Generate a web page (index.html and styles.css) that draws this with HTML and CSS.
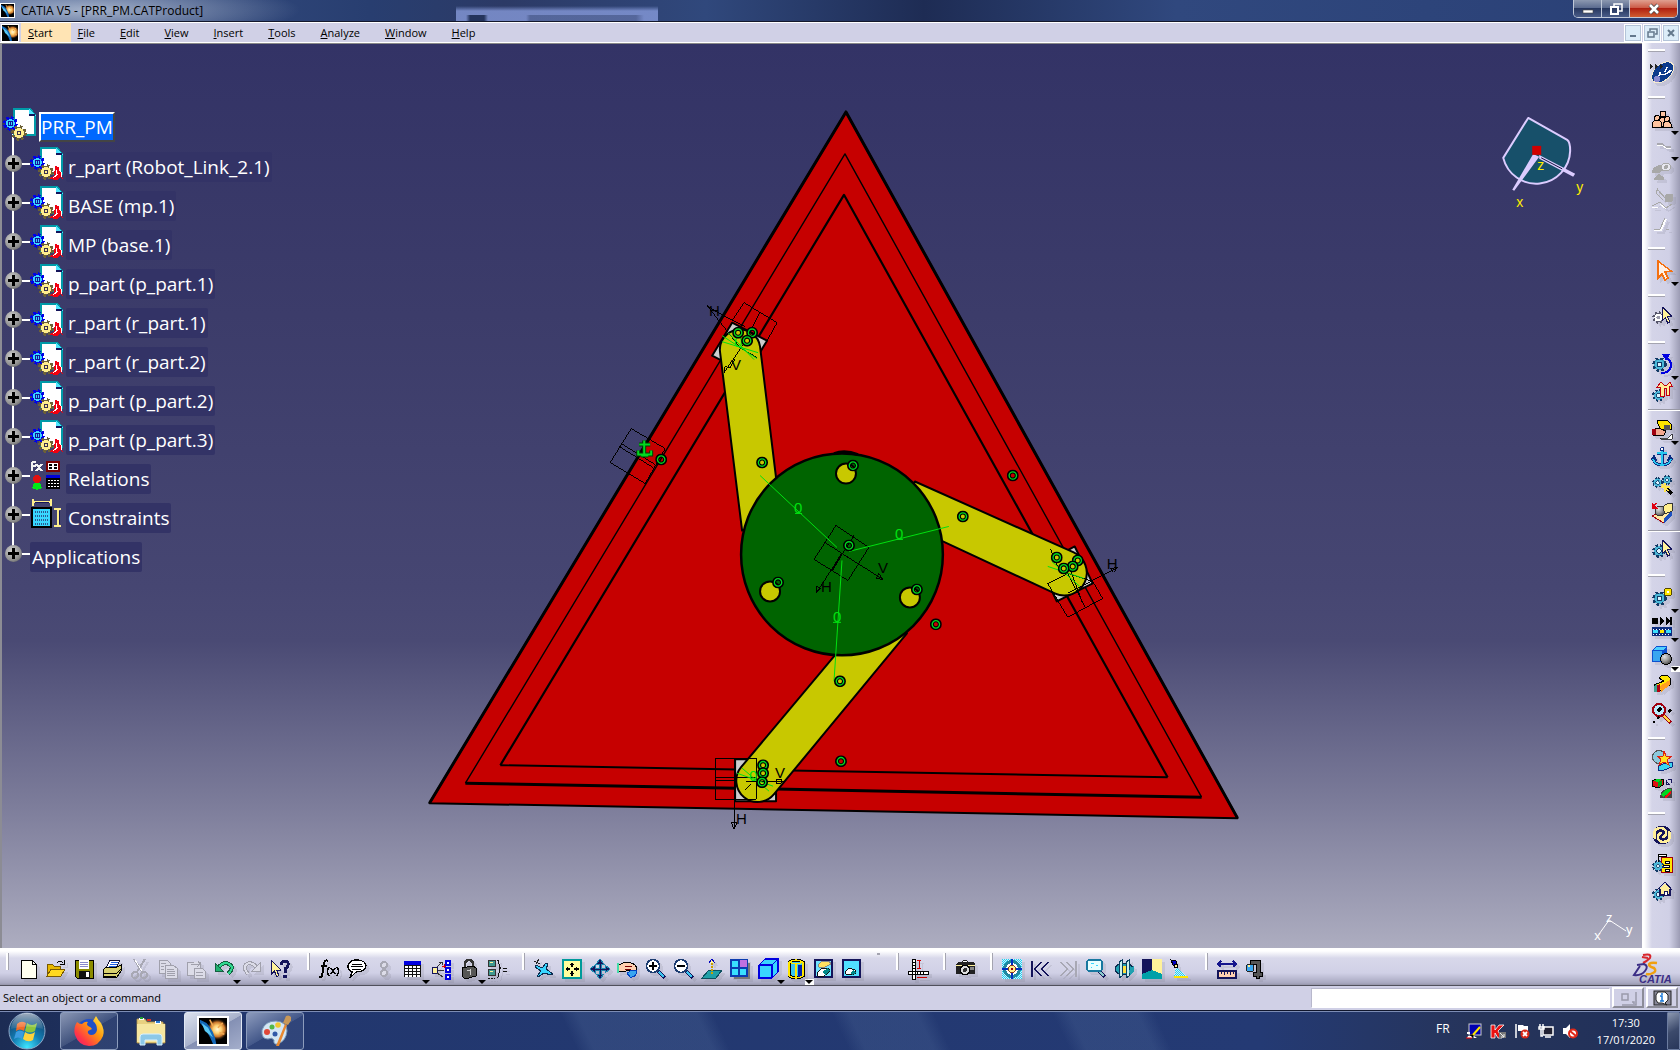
FILE: index.html
```html
<!DOCTYPE html>
<html lang="en">
<head>
<meta charset="utf-8">
<title>CATIA V5 - [PRR_PM.CATProduct]</title>
<link rel="stylesheet" href="styles.css">
</head>
<body>
<svg class="defs" aria-hidden="true">
<defs>
<pattern id="dots" width="2" height="2" patternUnits="userSpaceOnUse"><rect width="2" height="2" fill="#cfefff"/><rect width="1" height="1" fill="#22d0ee"/><rect x="1" y="1" width="1" height="1" fill="#22d0ee"/></pattern>
<radialGradient id="ball" cx=".35" cy=".3" r=".8"><stop offset="0" stop-color="#e4e4e4"/><stop offset=".5" stop-color="#9a9a9a"/><stop offset="1" stop-color="#3c3c3c"/></radialGradient>
<radialGradient id="burst" cx=".55" cy=".5" r=".5"><stop offset="0" stop-color="#fff8d8"/><stop offset=".35" stop-color="#ffd070"/><stop offset=".65" stop-color="#c8742a"/><stop offset="1" stop-color="#000" stop-opacity="0"/></radialGradient>
<radialGradient id="orb" cx=".5" cy=".95" r=".9"><stop offset="0" stop-color="#3fe6ff"/><stop offset=".45" stop-color="#137fb5"/><stop offset="1" stop-color="#123a66"/></radialGradient>
<linearGradient id="shine" x1="0" y1="0" x2="0" y2="1"><stop offset="0" stop-color="#fff" stop-opacity=".75"/><stop offset="1" stop-color="#fff" stop-opacity=".1"/></linearGradient>
<linearGradient id="fox" x1="1" y1="0" x2="0" y2="1"><stop offset="0" stop-color="#fff44f"/><stop offset=".4" stop-color="#ff980e"/><stop offset=".75" stop-color="#ff3647"/><stop offset="1" stop-color="#e31587"/></linearGradient>
<symbol id="gear" viewBox="0 0 14 14"><circle cx="7" cy="7" r="5" fill="none" stroke="currentColor" stroke-width="3.6" stroke-dasharray="2.2 1.7"/><circle cx="7" cy="7" r="5" fill="currentColor"/></symbol>
<symbol id="gearc" viewBox="0 0 14 14"><circle cx="7" cy="7" r="5.3" fill="#39a6c6" stroke="#123a66" stroke-width="3" stroke-dasharray="2.4 1.8"/><circle cx="7" cy="7" r="4.6" fill="#4db8d8"/><circle cx="7" cy="7" r="2.2" fill="#d8f4ff" stroke="#123a66"/></symbol>
<symbol id="cursor" viewBox="0 0 10 16"><path d="M1 0V13L4 10L6 15L8 14L6 9H10Z" fill="#fff29a" stroke="#14145a"/></symbol>
<symbol id="comet" viewBox="0 0 16 16"><rect width="16" height="16" fill="#000"/><ellipse cx="10" cy="7" rx="7" ry="7" fill="url(#burst)"/><path d="M0 1L4 3Q9 8 10 16H8Q5 8 0 3Z" fill="#1468b8"/><path d="M1 3L5 6L8 12L3 8Z" fill="#59c8f4"/><path d="M6 1L8 5M14 3L11 6M15 10L12 9" stroke="#f0a850"/></symbol>
<symbol id="part" viewBox="0 0 33 33">
<path d="M11 1H27L32 7V27H11Z" fill="#fff" stroke="#009aa8" stroke-width="2"/><path d="M26 0L33 8H26Z" fill="#4de6ff"/><rect x="26" y="6" width="6" height="2" fill="#14145a"/>
<g color="#0000e8"><use href="#gear" x="0" y="8" width="15" height="15"/></g><circle cx="7.500" cy="15.500" r="4.500" fill="#39d6ff"/><rect x="5" y="13" width="5" height="5" fill="#14149a"/><rect x="6" y="14" width="3" height="3" fill="#39d6ff"/><rect x="7" y="14" width="1" height="3" fill="#14149a"/>
<path d="M25 19L29 20V24L32 26V29L33 33L30 30L27 33L19 32L24 29Z" fill="#f00010"/><path d="M26 23V29M23 31L28 27M31 25V30" stroke="#fff" stroke-width="1"/>
<g color="#6b6038"><use href="#gear" x="8" y="17" width="16" height="16"/></g><circle cx="16" cy="25" r="5" fill="#ffee8c"/><rect x="14" y="23" width="4" height="4" fill="#3a3050"/><rect x="15" y="24" width="2" height="2" fill="#ffee8c"/>
</symbol>
<symbol id="product" viewBox="0 0 33 33">
<path d="M11 1H27L32 7V27H11Z" fill="#fff" stroke="#009aa8" stroke-width="2"/><path d="M26 0L33 8H26Z" fill="#4de6ff"/><rect x="26" y="6" width="6" height="2" fill="#14145a"/>
<g color="#0000e8"><use href="#gear" x="0" y="8" width="15" height="15"/></g><circle cx="7.500" cy="15.500" r="4.500" fill="#39d6ff"/><rect x="5" y="13" width="5" height="5" fill="#14149a"/><rect x="6" y="14" width="3" height="3" fill="#39d6ff"/><rect x="7" y="14" width="1" height="3" fill="#14149a"/>
<g color="#6b6038"><use href="#gear" x="8" y="17" width="16" height="16"/></g><circle cx="16" cy="25" r="5" fill="#ffee8c"/><rect x="14" y="23" width="4" height="4" fill="#3a3050"/><rect x="15" y="24" width="2" height="2" fill="#ffee8c"/>
</symbol>
<symbol id="relations" viewBox="0 0 33 33"><path d="M2 12V4Q2 2 6 3M1 7H6M6 5L12 12M12 5L6 12" stroke="#f4f4f4" stroke-width="2" fill="none"/><rect x="17" y="3" width="12" height="9" fill="#fff" stroke="#7a0000" stroke-width="2"/><path d="M19 6H22M24 6H27M19 9H22M24 9H27" stroke="#000" stroke-width="2"/><circle cx="7" cy="20" r="4" fill="#e01010"/><path d="M4 24H10L12 29L7 31L2 29Z" fill="#00e818"/><rect x="16" y="16" width="14" height="14" fill="#000"/><rect x="16" y="16" width="14" height="3" fill="#0000d8"/><path d="M18 21H29M18 24H29M18 27H29" stroke="#fff" stroke-dasharray="2 1"/></symbol>
<symbol id="constraints" viewBox="0 0 33 33"><path d="M3 1V8M21 1V8M3 4H21" stroke="#ffee8c" stroke-width="2"/><path d="M5 4H19" stroke="#14145a"/><path d="M24 11H31M24 28H31M28 11V28" stroke="#ffee8c" stroke-width="2"/><path d="M29 13V26" stroke="#14145a"/><rect x="2" y="10" width="19" height="19" fill="#39d6ff" stroke="#000" stroke-width="2"/><path d="M5 14H19M5 18H19M5 22H19M5 26H19" stroke="#2a5a90" stroke-width="2" stroke-dasharray="1 1"/></symbol>
<symbol id="ring" viewBox="-6 -6 12 12"><circle r="4" fill="none" stroke="#000" stroke-width="4"/><circle r="3.700" fill="none" stroke="#00d820" stroke-width="1.300"/></symbol>
</defs>
</svg>

<header class="titlebar">
  <svg class="appicon"><use href="#comet"/></svg>
  <h1 class="caption">CATIA V5 - [PRR_PM.CATProduct]</h1>
  <div class="winctl">
    <button class="winbtn" aria-label="Minimize"><svg viewBox="0 0 14 12"><rect x="2" y="7" width="10" height="3" fill="#fff" stroke="#444" stroke-width=".6"/></svg></button>
    <button class="winbtn" aria-label="Restore"><svg viewBox="0 0 14 12"><path d="M5 3V1H13V8H10" fill="none" stroke="#fff" stroke-width="1.500"/><rect x="2" y="4" width="7" height="7" fill="none" stroke="#fff" stroke-width="2"/></svg></button>
    <button class="winbtn winbtn-close" aria-label="Close"><svg viewBox="0 0 14 12"><path d="M3 2L11 10M11 2L3 10" stroke="#444" stroke-width="4"/><path d="M3 2L11 10M11 2L3 10" stroke="#fff" stroke-width="2.600"/></svg></button>
  </div>
</header>

<nav class="menubar">
  <svg class="menuicon"><use href="#comet"/></svg>
  <button class="menu menu-on"><u>S</u>tart</button>
  <button class="menu"><u>F</u>ile</button>
  <button class="menu"><u>E</u>dit</button>
  <button class="menu"><u>V</u>iew</button>
  <button class="menu"><u>I</u>nsert</button>
  <button class="menu"><u>T</u>ools</button>
  <button class="menu"><u>A</u>nalyze</button>
  <button class="menu"><u>W</u>indow</button>
  <button class="menu"><u>H</u>elp</button>
  <div class="mdi">
    <button class="mdibtn" aria-label="Minimize document"><svg viewBox="0 0 12 12"><path d="M3 9H9" stroke="#64788c" stroke-width="2"/></svg></button>
    <button class="mdibtn" aria-label="Restore document"><svg viewBox="0 0 12 12"><path d="M4 4V2H11V7H9M2 5H8V10H2Z" fill="none" stroke="#64788c" stroke-width="1.500"/></svg></button>
    <button class="mdibtn" aria-label="Close document"><svg viewBox="0 0 12 12"><path d="M3 3L9 9M9 3L3 9" stroke="#64788c" stroke-width="2"/></svg></button>
  </div>
</nav>

<div class="work">
<main class="viewport">
<svg class="scene" viewBox="0 42 1642 906" preserveAspectRatio="xMidYMid meet">
  <g stroke="#000" stroke-linejoin="round">
    <path d="M846 111L429 803L1238 818Z" fill="#c60000" stroke-width="2"/>
    <path d="M429 803L846 111L1238 818" fill="none" stroke-width="3"/>
    <path d="M465 783L845 153L1202 797" fill="none" stroke-width="1.400"/>
    <path d="M465 783L1202 797" fill="none" stroke-width="3"/>
    <path d="M500 765L844 194L1168 777" fill="none" stroke-width="2.200"/>
    <path d="M500 765L1168 777" fill="none" stroke-width="2"/>
    <g fill="#cdcdcd" stroke-width="2">
      <path d="M732 322L767 340L747 373L712 355Z"/>
      <path d="M1075 546L1093 583L1057 601L1040 565Z"/>
      <path d="M735 759H776V801H735Z"/>
    </g>
    <g fill="#c8c800" stroke-width="2">
      <path d="M742 530L720 352A20 20 0 0 1 760 346L776 477L800 520Z"/>
      <path d="M915 481L1074 552A21 21 0 0 1 1055 593L943 541L890 520Z"/>
      <path d="M834 656L741 767A21 21 0 0 0 774 794L907 633L880 610Z"/>
    </g>
    <circle cx="842" cy="554" r="101" fill="#006400" stroke-width="2.500"/>
    <path d="M834 453Q845 449 858 454" fill="none" stroke-width="3"/>
    <g fill="#c8c800" stroke-width="2"><circle cx="846" cy="473" r="10"/><circle cx="770" cy="591" r="10"/><circle cx="910" cy="597" r="10"/></g>
  </g>
  <g stroke="#000" fill="none" shape-rendering="crispEdges">
    <path d="M836 525L869 547L848 580L814 559ZM825 542L859 564M854 535L832 570M842 553L883 579L876 578L879 573L883 579M842 553L816 593L817 586L821 588L816 593"/>
    <path d="M842 553L832 570" stroke-width="2"/>
    <path d="M732 320L744 302L777 322L767 340M760 311L752 327M707 305L740 347L757 357M707 305L718 312L745 326M743 344L724 372L725 366L730 367L735 358"/>
    <path d="M631 428L665 448L645 483L610 462ZM621 443L655 464M619 446L653 467"/>
    <path d="M1048 583L1068 573L1093 581L1103 598L1068 617ZM1068 573L1086 608M1071 571L1083 603M1068 593L1118 567L1111 568L1114 572L1118 567M1051 549L1058 566"/>
    <path d="M715 758H756V799H715ZM715 777H756M715 780H737M734 758V829L731 822H737L734 829M746 781H784M776 779H781V783H776ZM751 784L745 790"/>
  </g>
  <g stroke="#00e010" fill="none">
    <path d="M760 475L837 547M849 551L949 526M842 560L834 681"/>
    <path d="M722 335L757 358M722 341L758 352M728 332L754 359M1048 566L1084 578M1052 561L1080 586M737 773L773 786M742 768L769 791"/>
    <path d="M795 513H802M896 539H903M833 622H841"/>
  </g>
  <g class="dim"><text x="794" y="513">0</text><text x="895" y="539">0</text><text x="833" y="622">0</text><text x="734" y="346">0</text><text x="749" y="781">0</text></g>
  <g class="axis"><text x="709" y="315">H</text><text x="731" y="369">V</text><text x="878" y="573">V</text><text x="821" y="592">H</text><text x="1107" y="569">H</text><text x="775" y="778">V</text><text x="736" y="824">H</text></g>
  <g>
    <use href="#ring" x="732" y="326" width="12" height="12"/><use href="#ring" x="746" y="326" width="12" height="12"/><use href="#ring" x="741" y="334" width="12" height="12"/>
    <use href="#ring" x="756" y="456" width="12" height="12"/><use href="#ring" x="655" y="453" width="12" height="12"/><use href="#ring" x="843" y="539" width="12" height="12"/>
    <use href="#ring" x="957" y="510" width="12" height="12"/><use href="#ring" x="1007" y="469" width="12" height="12"/><use href="#ring" x="1051" y="551" width="12" height="12"/>
    <use href="#ring" x="1072" y="554" width="12" height="12"/><use href="#ring" x="1067" y="560" width="12" height="12"/><use href="#ring" x="1058" y="562" width="12" height="12"/>
    <use href="#ring" x="930" y="618" width="12" height="12"/><use href="#ring" x="834" y="675" width="12" height="12"/><use href="#ring" x="835" y="755" width="12" height="12"/>
    <use href="#ring" x="757" y="759" width="12" height="12"/><use href="#ring" x="757" y="767" width="12" height="12"/><use href="#ring" x="756" y="776" width="12" height="12"/>
    <use href="#ring" x="847" y="459" width="12" height="12"/><use href="#ring" x="772" y="576" width="12" height="12"/><use href="#ring" x="911" y="583" width="12" height="12"/>
  </g>
  <path d="M644 440V455M639 444H650M638 450V454H651V450M641 455H648" fill="none" stroke="#003c00" stroke-width="4"/>
  <path d="M644 440V455M639 444H650M638 450V454H651V450M641 455H648" fill="none" stroke="#00d820" stroke-width="2"/>
  <g>
    <path d="M1529 117L1568 139Q1571 141 1571 150A34 34 0 0 1 1504 157Z" fill="#17506a" stroke="#dcccff" stroke-width="2" stroke-linejoin="round"/>
    <path d="M1534 153L1540 156L1515 190L1513 189ZM1540 154L1576 173L1574 176L1540 158Z" fill="#dcccff"/>
    <path d="M1542 157L1563 168" stroke="#14143c"/>
    <rect x="1533" y="145" width="9" height="9" fill="#d00000"/>
    <g class="compass"><text x="1517" y="206">x</text><text x="1577" y="191">y</text><text x="1538" y="169">z</text></g>
    <path d="M1600 934L1610 920L1627 931" fill="none" stroke="#fff"/>
    <g class="triad"><text x="1607" y="922">z</text><text x="1595" y="940">x</text><text x="1627" y="934">y</text></g>
  </g>
</svg>
<ul class="tree">
  <li class="node node-root"><svg class="nodeicon"><use href="#product"/></svg><span class="label label-sel">PRR_PM</span></li>
  <li class="node"><button class="plus" aria-label="Expand"></button><svg class="nodeicon"><use href="#part"/></svg><span class="label">r_part (Robot_Link_2.1)</span></li>
  <li class="node"><button class="plus" aria-label="Expand"></button><svg class="nodeicon"><use href="#part"/></svg><span class="label">BASE (mp.1)</span></li>
  <li class="node"><button class="plus" aria-label="Expand"></button><svg class="nodeicon"><use href="#part"/></svg><span class="label">MP (base.1)</span></li>
  <li class="node"><button class="plus" aria-label="Expand"></button><svg class="nodeicon"><use href="#part"/></svg><span class="label">p_part (p_part.1)</span></li>
  <li class="node"><button class="plus" aria-label="Expand"></button><svg class="nodeicon"><use href="#part"/></svg><span class="label">r_part (r_part.1)</span></li>
  <li class="node"><button class="plus" aria-label="Expand"></button><svg class="nodeicon"><use href="#part"/></svg><span class="label">r_part (r_part.2)</span></li>
  <li class="node"><button class="plus" aria-label="Expand"></button><svg class="nodeicon"><use href="#part"/></svg><span class="label">p_part (p_part.2)</span></li>
  <li class="node"><button class="plus" aria-label="Expand"></button><svg class="nodeicon"><use href="#part"/></svg><span class="label">p_part (p_part.3)</span></li>
  <li class="node"><button class="plus" aria-label="Expand"></button><svg class="nodeicon"><use href="#relations"/></svg><span class="label">Relations</span></li>
  <li class="node"><button class="plus" aria-label="Expand"></button><svg class="nodeicon"><use href="#constraints"/></svg><span class="label">Constraints</span></li>
  <li class="node node-bare"><button class="plus" aria-label="Expand"></button><span class="label">Applications</span></li>
</ul>
</main>

<aside class="sidebar">
  <div class="group">
    <button class="tool" aria-label="DMU Kinematics"><svg viewBox="0 0 20 20"><g transform="rotate(-42 10 11)"><ellipse cx="11" cy="11" rx="13" ry="8" fill="#0c3a8c" stroke="#f4ead0"/></g><path d="M3 17Q8 15 8 10M8 12Q14 14 19 8M13 10L15 5" stroke="#fff" fill="none" stroke-width="1.500"/><circle cx="5" cy="17" r="3" fill="#8888d0"/><path d="M-2 2L1 4.500L-2 7ZM3 2L6 4.500L3 7ZM8 2L11 4.500L8 7Z" fill="#222"/></svg></button>
  </div>
  <div class="group group-tight">
    <button class="tool drop" aria-label="Manikin"><svg viewBox="0 0 20 20"><g fill="#ffc4a0" stroke="#000"><path d="M6 17Q6 8 11 8T16 17Z"/><circle cx="11" cy="5" r="3"/><path d="M0 18Q0 11 5 11T10 18Z"/><circle cx="5" cy="9" r="2.500"/><path d="M11 18Q11 12 15 12T20 18Z"/><circle cx="15" cy="10" r="2.500"/></g></svg></button>
    <button class="tool drop" aria-label="Spline" disabled><svg viewBox="0 0 20 20"><path d="M5 8H10L14 11H19" stroke="#a8a8b0" stroke-width="1.500" fill="none"/><path d="M5 9H10L14 12H19" stroke="#fff" fill="none"/></svg></button>
    <button class="tool" aria-label="Swept volume" disabled><svg viewBox="0 0 20 20"><path d="M0 11Q0 4 8 3L12 7Q9 11 5 11ZM3 15L7 12L12 15V18H2Z" fill="#a8a8a8"/><ellipse cx="14" cy="5" rx="5" ry="4" fill="#e8e8f0" stroke="#a8a8a8"/><circle cx="14" cy="5" r="2" fill="#a8a8a8"/></svg></button>
    <button class="tool" aria-label="Trace" disabled><svg viewBox="0 0 20 20"><path d="M6 2L13 10M4 5L11 12M4 5L6 0M0 18L8 14L14 20L20 16" stroke="#a8a8a8" stroke-width="1.200" fill="none"/><rect x="13" y="6" width="8" height="8" rx="2" fill="#a8a8a8"/><path d="M0 19H6M8 16L14 21" stroke="#fff"/></svg></button>
    <button class="tool" aria-label="Plane" disabled><svg viewBox="0 0 20 20"><path d="M2 16H9L14 5" stroke="#fff" stroke-width="2" fill="none"/><path d="M2 15H8L13 4M14 15H17" stroke="#a8a8a8" fill="none"/></svg></button>
  </div>
  <div class="group"><button class="tool drop" aria-label="Select"><svg viewBox="0 0 20 20"><path d="M6 1V18L10 14L13 20L16 18L13 12L19 11Z" fill="#fff0e4" stroke="#f47010" stroke-width="1.500"/></svg></button></div>
  <div class="group"><button class="tool drop" aria-label="Product selection"><svg viewBox="0 0 20 20"><g color="#55556a"><use href="#gear" x="0" y="4" width="13" height="13"/></g><circle cx="6.500" cy="10.500" r="4" fill="#fff"/><circle cx="6.500" cy="10.500" r="2" fill="#99a"/><use href="#cursor" x="9" y="0" width="11" height="17"/></svg></button></div>
  <div class="group">
    <button class="tool drop" aria-label="Update"><svg viewBox="0 0 20 20"><use href="#gearc" x="0" y="3" width="15" height="15"/><path d="M9 19Q19 19 19 10Q18 5 13 4" stroke="#0000e0" stroke-width="2" fill="none"/><path d="M10 0H18L14 7Z" fill="#0000e0"/></svg></button>
    <button class="tool" aria-label="Manipulate"><svg viewBox="0 0 20 20"><use href="#gearc" x="0" y="7" width="13" height="13"/><path d="M8 14V5H5L9 0L12 3L15 3L18 0L20 4H17V13H14V6H12V14Z" fill="#ffee9a" stroke="#c00010"/></svg></button>
    <hr class="rule">
    <button class="tool drop" aria-label="Existing component"><svg viewBox="0 0 20 20"><path d="M5 2L15 1L19 5V10H8Z" fill="#ffe600" stroke="#000"/><path d="M12 6H18V11H12Z" fill="#555"/><path d="M0 11L6 9L14 12L12 16H1Z" fill="#f4a890" stroke="#000"/><path d="M0 10H4V16H0Z" fill="#a00010"/><path d="M8 19H16L20 15V20H9Z" fill="#fff" stroke="#000" stroke-width=".7"/></svg></button>
    <button class="tool" aria-label="Fix component"><svg viewBox="0 0 20 20"><path d="M10 3V18M5 6H15M1 12Q3 18 10 18T19 12M0 13L2 10L4 14M16 14L18 10L20 13" stroke="#0c2c80" stroke-width="3" fill="none"/><path d="M10 3V18M5 6H15M1 12Q3 18 10 18T19 12" stroke="#28c8f0" stroke-width="1.500" fill="none"/><circle cx="10" cy="2" r="1.500" fill="#fff" stroke="#0c2c80"/></svg></button>
    <button class="tool" aria-label="Quick constraint"><svg viewBox="0 0 20 20"><use href="#gearc" x="0" y="2" width="11" height="11"/><use href="#gearc" x="10" y="0" width="10" height="10"/><path d="M15 14L20 19" stroke="#000" stroke-width="3"/><path d="M13 8V17M9 12H18M10 9L16 16" stroke="#ffe650" stroke-width="1.500"/></svg></button>
    <button class="tool" aria-label="Flexible sub-assembly"><svg viewBox="0 0 20 20"><path d="M0 13L12 20L20 10L12 8Z" fill="#ffe8a0" stroke="#a00010"/><path d="M12 20L20 12V7L12 15Z" fill="#1c50c0"/><circle cx="8" cy="8" r="5" fill="url(#ball)" stroke="#333"/><path d="M11 4Q14 0 20 0V8L13 11Z" fill="#ffee8c" stroke="#333"/><path d="M0 0V5H5ZM5 0L1 3" fill="#e00010" stroke="#e00010"/></svg></button>
    <hr class="rule">
    <button class="tool" aria-label="Component select"><svg viewBox="0 0 20 20"><use href="#gearc" x="0" y="4" width="14" height="14"/><use href="#cursor" x="9" y="0" width="11" height="17"/></svg></button>
  </div>
  <div class="group group-loose">
    <button class="tool drop" aria-label="Mechanism"><svg viewBox="0 0 20 20"><use href="#gearc" x="0" y="4" width="15" height="15"/><circle cx="16" cy="5" r="4" fill="#ffe600" stroke="#554800"/><circle cx="16" cy="5" r="1.500" fill="#fff"/></svg></button>
    <button class="tool drop" aria-label="Simulation player"><svg viewBox="0 0 20 20"><path d="M0 2H6V8H0ZM8 1L13 5L8 9ZM14 1L18 5L14 9ZM18 1H20V9H18Z" fill="#000"/><rect x="0" y="11" width="20" height="9" fill="#0c2c80"/><path d="M1 13H19M1 18H19" stroke="#fff" stroke-dasharray="1 2"/><path d="M1 14H6V17H1ZM14 14H19V17H14Z" fill="#39e0ff"/><path d="M8 14H12V17H8Z" fill="#ffe600"/></svg></button>
    <button class="tool drop drop-lit" aria-label="Clash"><svg viewBox="0 0 20 20"><path d="M0 5L4 1H15V13L11 17H0Z" fill="#0c50d0"/><path d="M1 6H10V16H1Z" fill="#39a6f0"/><path d="M1 5L5 2H14L11 5Z" fill="#50d0ff"/><circle cx="14" cy="14" r="5.500" fill="url(#ball)" stroke="#000"/></svg></button>
    <button class="tool" aria-label="Sweep"><svg viewBox="0 0 20 20"><path d="M2 11V17H8L18 11V4L15 1H10L7 4L10 6L12 7Z" fill="#ffe600" stroke="#000"/><path d="M2 12L5 10V18H2Z" fill="#40a090"/><path d="M8 12L18 6V11L9 18Z" fill="#ffa020"/><path d="M5 11L8 10V18H5Z" fill="#b00010"/></svg></button>
    <button class="tool" aria-label="Analyze mechanism"><svg viewBox="0 0 20 20"><path d="M11 12L19 20" stroke="#a00010" stroke-width="4"/><path d="M12 13L18 19" stroke="#ffd840" stroke-width="2"/><circle cx="7" cy="7" r="6" fill="#b8ecff" stroke="#a00010" stroke-width="2"/><path d="M4 7L8 3L10 6L7 9ZM5 14L7 12L8 15L5 16ZM15 8L18 5L20 8L17 10ZM1 18H3V20H1Z" fill="#000"/></svg></button>
  </div>
  <div class="group">
    <button class="tool" aria-label="Explode"><svg viewBox="0 0 20 20"><circle cx="7" cy="7" r="6.500" fill="#8cc8dc" stroke="#555"/><path d="M6 16L16 12H20V17L12 20H6Z" fill="#39d6f0" stroke="#0c2c80"/><path d="M12 1L14 6L20 6L15 10L17 15L12 12L7 15L9 9L5 6L11 6Z" fill="#ffe020" stroke="#e02010"/></svg></button>
    <button class="tool" aria-label="Apply material"><svg viewBox="0 0 20 20"><path d="M0 3L5 1H11V7L6 10L0 8Z" fill="#e01010" stroke="#000"/><path d="M1 3L5 1H10L6 4Z" fill="#00d820"/><path d="M6 4L10 2V7L6 9Z" fill="#00a018"/><path d="M14 2V6H18M14 3L18 7M16 1H19V5" stroke="#14145a" fill="none"/><path d="M8 20Q8 10 20 10V20Z" fill="#444"/><path d="M9 17Q12 11 19 11V14L11 19Z" fill="#00d820"/><path d="M12 19L19 13V16L14 20Z" fill="#f01010"/></svg></button>
  </div>
  <div class="group">
    <button class="tool" aria-label="Refresh"><svg viewBox="0 0 20 20"><circle cx="10" cy="10" r="9.500" fill="#14145a"/><path d="M3 14Q0 3 9 3Q15 4 14 9Q14 12 10 12M17 6Q20 17 11 17Q5 16 6 11Q6 8 10 8" stroke="#ffee9a" stroke-width="2.500" fill="none"/></svg></button>
    <button class="tool" aria-label="Command structure"><svg viewBox="0 0 20 20"><rect x="9" y="4" width="11" height="15" fill="#ffe600" stroke="#a00010"/><path d="M6 1H14V3H6ZM6 3V9" fill="#fff" stroke="#000"/><path d="M13 8H17V10H13ZM11 12H17V14H11ZM13 16H17V18H13Z" fill="#fff" stroke="#000"/><use href="#gearc" x="0" y="7" width="12" height="12"/></svg></button>
    <button class="tool" aria-label="Home product"><svg viewBox="0 0 20 20"><use href="#gearc" x="0" y="7" width="13" height="13"/><path d="M7 8V15H18V8L13 2Z" fill="#ffee9a"/><path d="M5 9L13 1L20 9M8 8V14H18V8" fill="none" stroke="#14145a" stroke-width="1.200"/><rect x="12" y="10" width="3" height="4" fill="#fff" stroke="#14145a"/></svg></button>
  </div>
</aside>
</div>

<div class="toolbar">
  <div class="hgroup">
    <button class="tool" aria-label="New"><svg viewBox="0 0 20 20"><path d="M3 1H14L18 5V19H3Z" fill="#fffff0" stroke="#000"/><path d="M14 1V5H18" fill="none" stroke="#000"/></svg></button>
    <button class="tool" aria-label="Open"><svg viewBox="0 0 20 20"><path d="M1 17V5H6L8 7H14V10" fill="#e8b800" stroke="#7a5a00"/><path d="M1 17L5 10H19L15 17Z" fill="#ffd820" stroke="#7a5a00"/><path d="M11 4Q14 1 17 4M18 1V5H14" stroke="#000" fill="none"/></svg></button>
    <button class="tool" aria-label="Save"><svg viewBox="0 0 20 20"><path d="M1 1H19V19H3L1 17Z" fill="#8c8c00" stroke="#000"/><rect x="5" y="1" width="10" height="9" fill="#fff"/><path d="M6 3H14M6 5H14M6 7H14" stroke="#88c"/><rect x="5" y="12" width="11" height="7" fill="#111"/><rect x="12" y="13" width="3" height="5" fill="#fff"/></svg></button>
    <button class="tool" aria-label="Print"><svg viewBox="0 0 20 20"><path d="M8 1H18L14 9H4Z" fill="#fff" stroke="#113"/><path d="M9 3H16M8 5H15M7 7H14" stroke="#2060e0"/><path d="M1 11L4 8H15L19 6V12L15 18H1Z" fill="#d8d070" stroke="#000"/><path d="M1 14H15L19 10M2 17H14" stroke="#000" fill="none"/></svg></button>
    <button class="tool" aria-label="Cut" disabled><svg viewBox="0 0 20 20"><path d="M4 0L12 13M15 0L7 13" stroke="#a8a8b4" stroke-width="2"/><path d="M5 1L12 12" stroke="#fff"/><circle cx="5" cy="16" r="3" fill="none" stroke="#a8a8b4" stroke-width="2"/><circle cx="14" cy="16" r="3" fill="none" stroke="#a8a8b4" stroke-width="2"/></svg></button>
    <button class="tool" aria-label="Copy" disabled><svg viewBox="0 0 20 20"><g fill="#dcdce8" stroke="#a0a0ac"><path d="M1 1H9L12 4V14H1Z"/><path d="M7 6H15L19 9V19H7Z"/><path d="M9 10H16M9 12H17M9 14H17M9 16H17M3 4H8M3 7H6M3 10H6"/></g></svg></button>
    <button class="tool" aria-label="Paste" disabled><svg viewBox="0 0 20 20"><g fill="#dcdce8" stroke="#a0a0ac"><path d="M1 3H14V16H1Z"/><path d="M8 9H16L19 12V19H8Z"/><path d="M10 13H17M10 16H17M5 5H14L12 2M14 5L11 8"/></g></svg></button>
    <button class="tool drop" aria-label="Undo"><svg viewBox="0 0 20 20"><path d="M3 10Q9 2 15 5T14 15" stroke="#146040" stroke-width="4" fill="none"/><path d="M3 10Q9 2 15 5T14 15" stroke="#30d890" stroke-width="2" fill="none"/><path d="M1 4V12H9Z" fill="#20b070" stroke="#146040"/></svg></button>
    <button class="tool drop" aria-label="Redo" disabled><svg viewBox="0 0 20 20"><path d="M16 10Q10 2 5 5T6 15" stroke="#a0a0ac" stroke-width="4" fill="none"/><path d="M16 10Q10 2 5 5T6 15" stroke="#dcdce8" stroke-width="2" fill="none"/><path d="M18 4V12H10Z" fill="#dcdce8" stroke="#a0a0ac"/></svg></button>
    <button class="tool" aria-label="What's This?"><svg viewBox="0 0 20 20"><use href="#cursor" x="0" y="1" width="11" height="18"/><path d="M11 6Q11 2 15 2T18 6Q18 8 15 10V14" stroke="#14145a" stroke-width="3" fill="none"/><rect x="13" y="16" width="4" height="3" fill="#14145a"/></svg></button>
  </div>
  <div class="hgroup">
    <button class="tool" aria-label="Formula"><svg viewBox="0 0 20 20"><path d="M9 2Q6 0 5 5L3 17Q2 19 0 18M2 7H8" stroke="#000" stroke-width="2" fill="none"/><path d="M10 8Q7 12 10 17M18 8Q21 12 18 17M12 9L16 15M16 9L12 15" stroke="#000" stroke-width="1.500" fill="none"/></svg></button>
    <button class="tool" aria-label="Comment"><svg viewBox="0 0 20 20"><path d="M5 13Q0 11 1 6Q4 0 11 1Q19 2 19 7Q18 13 9 13L3 19Z" fill="#fff" stroke="#000" stroke-width="1.300"/><path d="M5 5H15M4 7H16M5 10H14" stroke="#000"/></svg></button>
    <button class="tool" aria-label="Check" disabled><svg viewBox="0 0 20 20"><circle cx="9" cy="6" r="3" fill="#dcdce8" stroke="#a8a8b4" stroke-width="2"/><circle cx="9" cy="14" r="3" fill="#dcdce8" stroke="#a8a8b4" stroke-width="2"/></svg></button>
    <button class="tool drop" aria-label="Design table"><svg viewBox="0 0 20 20"><rect x="1" y="2" width="17" height="16" fill="#111"/><rect x="1" y="2" width="17" height="4" fill="#0000e0"/><path d="M2 8H18M2 11H18M2 14H18M2 17H18" stroke="#fff" stroke-width="2" stroke-dasharray="3 1"/></svg></button>
    <button class="tool" aria-label="Knowledge links"><svg viewBox="0 0 20 20"><rect x="1" y="8" width="5" height="6" fill="#fff29a" stroke="#14145a"/><g fill="#fff" stroke="#0000e0" stroke-width="1.500"><rect x="15" y="2" width="4" height="4"/><rect x="15" y="9" width="4" height="4"/><rect x="15" y="16" width="4" height="4"/></g><path d="M6 8L11 3M8 3H11V6M7 11H13M6 14L12 18" stroke="#333" fill="none"/><path d="M13 5V9M11 7H15" stroke="#d00"/></svg></button>
    <button class="tool drop" aria-label="Lock"><svg viewBox="0 0 20 20"><path d="M6 9V5Q6 1 10 1T14 5V9" stroke="#333" stroke-width="2.500" fill="none"/><path d="M3 9L14 7L17 9V17L6 20L3 17Z" fill="#555" stroke="#000"/><path d="M8 12L11 11V16" stroke="#ccc" fill="none"/></svg></button>
    <button class="tool" aria-label="Equivalent dimensions"><svg viewBox="0 0 20 20"><rect x="1" y="1" width="7" height="6" fill="#409890" stroke="#333"/><rect x="1" y="10" width="7" height="6" fill="#409890" stroke="#333"/><path d="M3 3H6M3 12H6" stroke="#fff29a"/><path d="M1 19H3M4 19H6M7 19H8M10 1Q12 1 12 5T14 9Q12 9 12 14T10 18M16 9H20M16 12H20" stroke="#111" fill="none"/></svg></button>
  </div>
  <div class="hgroup">
    <button class="tool" aria-label="Fly mode"><svg viewBox="0 0 20 20"><path d="M2 6L8 9L12 4L14 5L12 10L19 15L17 16L10 14L4 18L3 17L7 12L1 8Z" fill="#39d6ff" stroke="#0c2c50"/><path d="M0 2L6 5M5 0L2 5" stroke="#222"/></svg></button>
    <button class="tool" aria-label="Fit all in"><svg viewBox="0 0 20 20"><rect x="1" y="1" width="18" height="18" fill="#ffff9c" stroke="#009a9a" stroke-width="2"/><path d="M10 4V8M10 12V17M4 10H8M12 10H17" stroke="#000" stroke-width="1.500"/><path d="M8 6L10 3L12 6ZM8 14L10 17L12 14ZM6 8L3 10L6 12ZM14 8L17 10L14 12Z"/></svg></button>
    <button class="tool" aria-label="Pan"><svg viewBox="0 0 20 20"><path d="M10 0L14 5H11V9H15V6L20 10L15 14V11H11V15H14L10 20L6 15H9V11H5V14L0 10L5 6V9H9V5H6Z" fill="#14145a" stroke="#2088b0"/></svg></button>
    <button class="tool" aria-label="Rotate"><svg viewBox="0 0 20 20"><path d="M0 6L8 3Q16 3 19 9L17 13Q10 10 8 12H1Z" fill="#ffd0b0" stroke="#000"/><path d="M7 7H14M7 10H13" stroke="#7a0000"/><path d="M9 14Q14 10 19 12Q18 19 12 18Z" fill="#39a6f0" stroke="#0040c0"/><path d="M0 4V14" stroke="#4da" stroke-width="2"/></svg></button>
    <button class="tool" aria-label="Zoom in"><svg viewBox="0 0 20 20"><path d="M12 12L19 19" stroke="#14145a" stroke-width="4"/><path d="M13 13L18 18" stroke="#39c6f0" stroke-width="2"/><circle cx="7" cy="7" r="6.500" fill="#fff" stroke="#1c3c70" stroke-width="1.500"/><path d="M3 7H11M7 3V11" stroke="#000" stroke-width="2"/></svg></button>
    <button class="tool" aria-label="Zoom out"><svg viewBox="0 0 20 20"><path d="M12 12L19 19" stroke="#14145a" stroke-width="4"/><path d="M13 13L18 18" stroke="#39c6f0" stroke-width="2"/><circle cx="7" cy="7" r="6.500" fill="#fff" stroke="#1c3c70" stroke-width="1.500"/><path d="M3 7H11" stroke="#000" stroke-width="2"/></svg></button>
    <button class="tool" aria-label="Normal view"><svg viewBox="0 0 20 20"><path d="M0 19L7 11H20L14 19Z" fill="#20a0a8" stroke="#0c5060"/><path d="M10 4V15" stroke="#c8a000" stroke-width="1.500" stroke-dasharray="2 1"/><path d="M7 4L10 0L13 4" fill="#fff29a" stroke="#0000c0"/></svg></button>
    <button class="tool" aria-label="Multi-view"><svg viewBox="0 0 20 20"><rect x="4" y="4" width="16" height="16" fill="#777"/><rect x="1" y="1" width="16" height="16" fill="#39e0ff" stroke="#0c3cb0" stroke-width="1.500"/><rect x="9" y="1" width="8" height="8" fill="#c070e0"/><path d="M9 1V17M1 9H17" stroke="#0c3cb0" stroke-width="1.500"/></svg></button>
    <button class="tool drop" aria-label="Isometric view"><svg viewBox="0 0 20 20"><path d="M1 6L7 0H20V13L14 19H1Z" fill="#39d6ff" stroke="#0000e0" stroke-width="1.300"/><path d="M1 6H14V19M14 6L20 0" fill="none" stroke="#0000e0" stroke-width="1.300"/></svg></button>
    <button class="tool drop drop-lit" aria-label="Shading with edges"><svg viewBox="0 0 20 20"><path d="M3 3V17Q10 21 17 17V3Q10 -1 3 3Z" fill="#39c6f0" stroke="#000" stroke-width="3"/><path d="M12 6H17V17L12 18Z" fill="#0020b0"/><path d="M3 3V17Q10 21 17 17V3Q10 -1 3 3Q10 7 17 3M10 5V19" fill="none" stroke="#ffe600" stroke-width="1.300"/></svg></button>
    <button class="tool" aria-label="Hide/Show"><svg viewBox="0 0 20 20"><rect x="1" y="1" width="17" height="17" fill="#70e4ff" stroke="#14145a" stroke-width="1.500"/><path d="M4 6L8 2H15L17 5L11 8H5Z" fill="#ffe060" stroke="#888"/><path d="M3 14L8 9H14L16 12L10 17H4Z" fill="#fff" stroke="#111"/><path d="M8 13L14 9L16 12L11 16Z" fill="#008888"/></svg></button>
    <button class="tool" aria-label="Swap visible space"><svg viewBox="0 0 20 20"><rect x="1" y="1" width="17" height="17" fill="#50e0ff" stroke="#14145a" stroke-width="1.500"/><path d="M3 13L7 9L13 11L14 14L10 16L4 15Z" fill="#fff" stroke="#111"/><path d="M8 14L12 11L14 14L10 16Z" fill="#008888"/></svg></button>
  </div>
  <div class="nub"></div>
  <div class="hgroup"><button class="tool" aria-label="Measure tolerance"><svg viewBox="0 0 20 20"><path d="M4 0H7V20H4ZM0 12H20V15H0Z" fill="#fff" stroke="#000"/><path d="M4 3H7M4 6H7M4 9H7M9 12V15M12 12V15M15 12V15" stroke="#000"/><path d="M11 1V9M9 1H13M9 9H13M9 18H19" stroke="#c00"/></svg></button></div>
  <div class="hgroup"><button class="tool" aria-label="Capture"><svg viewBox="0 0 20 20"><path d="M1 5L3 3H7L8 1H12L13 3H18L20 5V15H1Z" fill="#222"/><path d="M1 6H20" stroke="#fff29a"/><path d="M8 2H12" stroke="#fff"/><rect x="15" y="8" width="4" height="3" fill="#888"/><circle cx="10" cy="11" r="4.500" fill="#ddd" stroke="#000" stroke-width="1.500"/><circle cx="10" cy="11" r="2" fill="#333"/></svg></button></div>
  <div class="hgroup">
    <button class="tool" aria-label="Target"><svg viewBox="0 0 20 20"><rect width="20" height="20" fill="url(#dots)"/><circle cx="10" cy="10" r="7.500" fill="#fff" stroke="#2088a0" stroke-width="3"/><path d="M10 0V20M0 10H20" stroke="#0030c0" stroke-width="1.300"/><circle cx="10" cy="10" r="3.500" fill="#ffee8c" stroke="#904020"/><circle cx="10" cy="10" r="1.500" fill="#a00010"/></svg></button>
    <button class="tool" aria-label="Previous view"><svg viewBox="0 0 20 20"><path d="M2 2V18M11 3L5 10L11 17M18 3L12 10L18 17" stroke="#14145a" stroke-width="1.500" fill="none"/></svg></button>
    <button class="tool" aria-label="Next view" disabled><svg viewBox="0 0 20 20"><path d="M18 2V18M3 3L9 10L3 17M9 3L15 10L9 17" stroke="#a8a8b4" stroke-width="1.500" fill="none"/></svg></button>
    <button class="tool" aria-label="Magnifier"><svg viewBox="0 0 20 20"><path d="M13 12L19 18" stroke="#14145a" stroke-width="4"/><path d="M14 13L18 17" stroke="#8cc" stroke-width="1.500"/><rect x="1" y="1" width="15" height="11" rx="3" fill="#e8ffff" stroke="#1878a0" stroke-width="1.800"/><path d="M5 4H8M10 6H12M5 8H6" stroke="#39d6ff"/></svg></button>
    <button class="tool" aria-label="Depth effect"><svg viewBox="0 0 20 20"><ellipse cx="10" cy="10" rx="9" ry="6" fill="#20a0b0" stroke="#0c2c50"/><path d="M9 7H15V14H9Z" fill="#ffe040"/><path d="M5 3L8 1V17L5 19ZM12 3L15 1V17L12 19Z" fill="#c8f0f0" stroke="#0c4060"/><path d="M15 11L20 7V12L16 16Z" fill="#20a0b0"/></svg></button>
    <button class="tool" aria-label="Ground"><svg viewBox="0 0 20 20"><path d="M0 0H10V11L0 16Z" fill="#14145a"/><path d="M10 0H20V16L10 11Z" fill="#fff29a"/><path d="M0 15L10 11L20 15V20H0Z" fill="#00a0a8"/></svg></button>
    <button class="tool" aria-label="Lighting"><svg viewBox="0 0 20 20"><path d="M6 8L17 17H4Z" fill="url(#dots)"/><path d="M4 18H18" stroke="#ffe600" stroke-width="2.500"/><path d="M1 1L6 2L7 7L3 6Z" fill="#0000c0" stroke="#000"/><circle cx="6" cy="7" r="2" fill="#fff29a" stroke="#000"/></svg></button>
  </div>
  <div class="hgroup">
    <button class="tool" aria-label="Measure between"><svg viewBox="0 0 20 20"><path d="M1 5H19M4 2L1 5L4 8M16 2L19 5L16 8" stroke="#14148c" stroke-width="1.500" fill="none"/><rect x="1" y="12" width="18" height="7" fill="#ffd0b0" stroke="#14145a" stroke-width="1.500"/><path d="M4 12V15M7 12V16M10 12V15M13 12V16M16 12V15" stroke="#14145a"/></svg></button>
    <button class="tool" aria-label="Measure item"><svg viewBox="0 0 20 20"><path d="M5 1H15V13H17V17H14V19H11V17H8V13H11V5H5Z" fill="#555" stroke="#000"/><circle cx="5" cy="9" r="4" fill="#39a6f0" stroke="#222"/><circle cx="4" cy="7" r="1.500" fill="#fff29a"/></svg></button>
  </div>
  <svg class="brand" viewBox="0 0 42 32"><path d="M11 2Q20 0 18 5Q15 8 11 10M16 5L10 4" fill="none" stroke="#d8262c" stroke-width="2"/><path d="M5 12L12 11Q17 13 13 18Q9 23 2 22L8 13" fill="none" stroke="#3c2e86" stroke-width="2"/><path d="M25 10Q17 9 17 12Q18 14 22 15Q25 18 21 20Q17 22 14 21" fill="none" stroke="#f0a010" stroke-width="2.500"/><text class="brandname" x="7" y="30">CATIA</text></svg>
</div>

<div class="status">
  <label class="prompt" for="cmd">Select an object or a command</label>
  <input class="cmd" id="cmd" type="text">
  <button class="sbtn" aria-label="Dialog box"><svg viewBox="0 0 20 16"><path d="M4 4H10V10H4ZM14 12H16V14M18 2V15H4" fill="none" stroke="#99a" stroke-width="1.500"/></svg></button>
  <button class="sbtn" aria-label="Knowledge base"><svg viewBox="0 0 20 16"><rect x="2" y="1" width="17" height="14" fill="#889" stroke="#222"/><path d="M6 2H13L16 5V10L13 13L15 15L10 13H6L4 10V5Z" fill="#fff" stroke="#222"/><path d="M8 6H10V11M8 11H12M10 3V5" stroke="#1878d8" stroke-width="1.500" fill="none"/></svg></button>
</div>

<footer class="taskbar">
  <button class="orb" aria-label="Start menu"><svg viewBox="0 0 38 38"><circle cx="19" cy="19" r="18" fill="url(#orb)" stroke="#8fa8c8"/><path d="M9 12Q13 8 18 11L16 19Q12 16 8 19Z" fill="#f06a28"/><path d="M19 11Q24 15 29 11L27 19Q22 22 17 19Z" fill="#8cc63c"/><path d="M8 20Q12 17 16 20L14 27Q10 24 6 27Z" fill="#3c9ce0"/><path d="M17 20Q22 24 27 20L25 28Q20 31 15 27Z" fill="#ffd23c"/><path d="M3 17A16 16 0 0 1 35 17Q19 12 3 17Z" fill="url(#shine)" opacity=".8"/></svg></button>
  <button class="task task-open" aria-label="Firefox"><svg viewBox="0 0 32 32"><circle cx="16" cy="17" r="13" fill="#2050c8"/><path d="M4 7Q6 9 9 9Q12 6 15 7Q13 9 15 11Q18 12 19 14L15 16Q14 19 18 20Q23 20 24 15Q24 9 20 6L23 1Q25 5 28 8Q32 15 30 21Q26 31 16 31T2 20Q0 13 4 7Z" fill="url(#fox)"/></svg></button>
  <button class="task" aria-label="Explorer"><svg viewBox="0 0 32 32"><path d="M2 4H10L12 7H28V9H30V28H2Z" fill="#e8d080" stroke="#b89848" stroke-width=".8"/><path d="M4 3H9V5H4ZM20 6H26V9H20Z" fill="#fff"/><rect x="5" y="2" width="3" height="2" fill="#20a030"/><rect x="12" y="4" width="4" height="2" fill="#d83020"/><rect x="21" y="6" width="4" height="2" fill="#2878d0"/><path d="M2 9H30V27H2Z" fill="#f6e6a0"/><path d="M5 30V22Q5 19 8 19H24Q27 19 27 22V30H22V25H10V30Z" fill="#8cc8e8" stroke="#d8f0ff"/></svg></button>
  <button class="task task-active" aria-label="CATIA V5"><svg class="framed"><use href="#comet"/></svg></button>
  <button class="task task-open" aria-label="Paint"><svg viewBox="0 0 32 32"><path d="M3 15Q6 6 17 6Q28 7 28 16Q27 26 19 29Q14 30 15 25Q13 22 9 24Q2 24 3 15Z" fill="#d4e6f4" stroke="#7898b8"/><circle cx="8" cy="17" r="3" fill="#e04838"/><circle cx="13" cy="12" r="2.500" fill="#50b848"/><circle cx="19" cy="10" r="2.800" fill="#f0c830"/><circle cx="16" cy="19" r="2.500" fill="#3058a8"/><path d="M17 31L26 9L28 10L20 31Z" fill="#e88830"/><path d="M24 8L27 1Q31 -1 33 4L29 10Z" fill="#c89858"/></svg></button>
  <div class="tray">
    <span class="lang">FR</span>
    <svg class="trayicon" viewBox="0 0 16 16"><rect x="3" y="1" width="12" height="11" fill="#0000b0" stroke="#ccc"/><path d="M6 13L14 4" stroke="#ffe600" stroke-width="2"/><path d="M1 9H4V11H1ZM2 13H8L11 15H1Z" fill="#fff"/><path d="M0 15H6" stroke="#f00"/><path d="M4 12H7V15" stroke="#000"/></svg>
    <svg class="trayicon" viewBox="0 0 16 16"><path d="M1 2H5V7L9 2H14L8 8L12 15H8L5 10V15H1Z" fill="#e81010" stroke="#fff" stroke-width=".8"/><rect x="9" y="9" width="7" height="6" fill="#777"/><path d="M10 10L14 14V11M14 14H11" stroke="#eee" fill="none"/></svg>
    <svg class="trayicon" viewBox="0 0 16 16"><path d="M2 1V15" stroke="#fff" stroke-width="1.500"/><path d="M4 2H9L10 3H14V9H10L9 8H4Z" fill="#fff"/><circle cx="11" cy="11" r="4.500" fill="#d82818"/><path d="M9 9L13 13M13 9L9 13" stroke="#fff" stroke-width="1.800"/></svg>
    <svg class="trayicon" viewBox="0 0 16 16"><rect x="5" y="4" width="10" height="8" fill="#223" stroke="#fff" stroke-width="1.500"/><path d="M7 14H13M2 1V4M5 1V4M1 4H6V6H1ZM3 6V13H5" stroke="#fff" stroke-width="1.500" fill="none"/></svg>
    <svg class="trayicon" viewBox="0 0 16 16"><path d="M1 5H4L8 1V15L4 11H1Z" fill="#fff"/><circle cx="11" cy="10.500" r="4" fill="#fff" stroke="#e02818" stroke-width="2"/><path d="M8 8L14 13" stroke="#e02818" stroke-width="2"/></svg>
    <time class="clock"><span>17:30</span><span>17/01/2020</span></time>
    <button class="peek" aria-label="Show desktop"></button>
  </div>
</footer>
</body>
</html>
```
FILE: styles.css
```css
*, *::before, *::after { box-sizing: border-box; }
html, body { height: 100%; }
body {
  margin: 0;
  display: flex;
  flex-direction: column;
  overflow: hidden;
  background: #d0d0e6;
  color: #000;
  font: 11px/16px "Open Sans", "Noto Sans", sans-serif;
}
button { margin: 0; padding: 0; border: 0; background: none; font: inherit; color: inherit; }
.defs { position: absolute; width: 0; height: 0; }

/* window caption */
.titlebar {
  display: flex;
  align-items: center;
  flex: none;
  height: 22px;
  border-bottom: 1px solid #14182c;
  background:
    radial-gradient(ellipse 210px 30px at 90px 10px, rgba(200, 210, 225, .75), rgba(200, 210, 225, 0)),
    linear-gradient(90deg, transparent, #24345c 4px 18px, transparent 22px 60px, rgba(36, 52, 92, .4) 64px 170px, transparent 178px) 466px 15px / 190px 7px no-repeat,
    linear-gradient(transparent 0 6px, rgba(140, 160, 225, .75) 11px) 456px 0 / 202px 22px no-repeat,
    linear-gradient(90deg, #3c558a, #283e70 22%, #2c3a66 30%, #30487c 42%, #1e2c54 55%, #30487e 70%, #2a4076 100%);
}
.appicon { width: 15px; height: 15px; border: 1px solid #fff; }
.caption { margin: 0; padding-left: 6px; font-size: 12px; font-weight: 400; }
.winctl {
  display: flex;
  align-self: flex-start;
  margin: 0 2px 0 auto;
  border: 1px solid #c0c8d8;
  border-top: 0;
  border-radius: 0 0 5px 5px;
  overflow: hidden;
}
.winbtn {
  width: 28px;
  height: 17px;
  display: grid;
  place-items: center;
  border-right: 1px solid #c0c8d8;
  background: linear-gradient(#8c98b0, #5c6c90 45%, #27375f 50%, #4a5c88);
}
.winbtn svg { width: 14px; height: 12px; }
.winbtn-close { width: 47px; border-right: 0; background: linear-gradient(#e0a090, #cc5c48 45%, #b02010 50%, #d05c30); }

/* menus */
.menubar { display: flex; align-items: center; flex: none; height: 21px; border-top: 1px solid #fff; border-bottom: 1px solid #fff; }
.menuicon { width: 18px; height: 18px; margin: 0 2px 0 1px; border: 1px solid #fff; }
.menu { height: 19px; padding: 0 18px 0 7px; }
.menu-on { background: #ffe4b4; }
.mdi { display: flex; gap: 1px; margin-left: auto; }
.mdibtn { width: 18px; height: 18px; display: grid; place-items: center; border: 1px solid #fff; outline: 1px solid #b4c4d8; outline-offset: -2px; background: #dcecf8; }
.mdibtn svg { width: 12px; height: 12px; }

/* work area */
.work { display: flex; flex: 1; min-height: 0; }
.viewport {
  position: relative;
  flex: 1;
  min-width: 0;
  border-top: 1px solid #888;
  border-left: 2px solid #8c8c94;
  background: linear-gradient(#333366 0%, #3c3c6a 30%, #464672 60%, #4a4a74 66%, #7c7c9a 84%, #adadc0 100%);
}
.scene { position: absolute; top: -1px; left: -2px; width: calc(100% + 2px); height: calc(100% + 1px); }
.scene text { font-family: "Liberation Sans", sans-serif; }
.axis { font-size: 15px; }
.dim { font-size: 15px; fill: #00e010; }
.compass { font-size: 14px; fill: #ffee00; }
.triad { font-size: 13px; fill: #fff; }

/* specification tree */
.tree { position: relative; width: max-content; margin: 0; padding: 61px 0 0 1px; list-style: none; color: #fff; font-size: 19px; line-height: 26px; }
.tree::before { content: ""; position: absolute; left: 10px; top: 90px; width: 2px; height: 424px; background: #fff; }
.node { position: relative; display: flex; align-items: center; height: 39px; }
.nodeicon { width: 33px; height: 33px; flex: none; shape-rendering: crispEdges; }
.plus {
  width: 17px;
  height: 17px;
  margin: 0 8px 0 2px;
  border-radius: 50%;
  background:
    linear-gradient(#000, #000) 50% / 11px 3px no-repeat,
    linear-gradient(#000, #000) 50% / 3px 11px no-repeat,
    radial-gradient(circle at 40% 35%, #d0d0d0, #909090 60%, #4c4c4c);
}
.node:not(.node-root)::before { content: ""; position: absolute; left: 19px; top: 19px; width: 8px; height: 2px; background: #fff; }
.label { margin: 7px 0 0 3px; padding: 2px; border-radius: 2px; background: #333366; }
.label-sel { margin-top: 5px; padding: 0; border: 2px solid #fff; border-right-color: #444; border-bottom-color: #444; border-radius: 0; background: #0068ff; }
.node-bare .label { margin-left: 0; }

/* right-hand toolbar */
.sidebar {
  flex: none;
  width: 38px;
  padding: 6px 6px 0 4px;
  border-left: 2px solid #fff;
  background: linear-gradient(90deg, #fff, #d4d4e8 22%, #d0d0e6 70%, #9c9cb4);
}
.group { display: flex; flex-direction: column; padding-bottom: 10px; }
.group::before { content: ""; width: 17px; height: 3px; margin-bottom: 6px; border-top: 1px solid #fff; border-bottom: 1px solid #a4a4b0; background: #fff; }
.group-tight .tool:not(:nth-child(1)) { height: 26px; }
.group-loose { gap: 1px; }
.group-loose::before { margin-bottom: 5px; }
.rule { width: 34px; height: 2px; margin: 3px 0 4px; border: 0; border-top: 1px solid #9898a4; background: #fff; }
.tool { position: relative; width: 28px; height: 28px; display: grid; place-items: center; }
.tool svg { width: 20px; height: 20px; overflow: visible; shape-rendering: crispEdges; filter: drop-shadow(3px 3px 0 rgba(120, 120, 130, .16)); }
.drop::after { content: ""; position: absolute; right: -3px; bottom: -2px; border: 4px solid transparent; border-top-color: #000; border-bottom: 0; }
.drop-lit::before { content: ""; position: absolute; right: -4px; bottom: -3px; width: 9px; height: 6px; background: #fff; }

/* bottom toolbar */
.toolbar {
  display: flex;
  align-items: center;
  flex: none;
  height: 38px;
  padding: 3px 0 0 6px;
  border-top: 1px solid #fff;
  border-bottom: 1px solid #50505c;
  background: linear-gradient(#fff, #fff 2px, #d8d8ea 9px, #d0d0e6 24px, #a8a8c0 34px, #9494a8);
}
.hgroup { display: flex; align-items: center; padding-right: 11px; }
.hgroup:first-child { padding-right: 13px; }
.hgroup::before { content: ""; align-self: flex-start; width: 3px; height: 17px; margin-right: 5px; border-left: 1px solid #fff; border-right: 1px solid #a4a4b0; background: #fff; }
.hgroup .tool { height: 32px; }
.hgroup .drop::after { right: -3px; bottom: 1px; }
.hgroup .drop-lit::before { bottom: 0; }
.nub { align-self: flex-start; width: 3px; height: 2px; margin: 1px 16px 0 0; background: #a4a4b0; }
.brand { width: 42px; height: 32px; margin: 0 6px 0 auto; overflow: visible; }
.brandname { font: italic 700 11px "Liberation Sans", sans-serif; fill: #3c2e86; }

/* prompt line */
.status { display: flex; align-items: center; flex: none; height: 24px; padding: 1px 2px 2px 3px; gap: 2px; }
.prompt { flex: 1; }
.cmd { width: 299px; height: 20px; border: 1px solid #b8b8cc; border-right-color: #fff; border-bottom-color: #fff; background: #fff; font: inherit; }
.sbtn { width: 32px; height: 21px; display: grid; place-items: center; border: 2px solid #fff; border-right-color: #8c8c98; border-bottom-color: #8c8c98; }
.sbtn svg { width: 20px; height: 16px; }

/* Windows taskbar */
.taskbar {
  display: flex;
  align-items: center;
  flex: none;
  height: 40px;
  border-top: 1px solid #10162c;
  box-shadow: inset 0 1px 0 #7c8cb4;
  background:
    linear-gradient(65deg, transparent 34%, rgba(120, 150, 190, .16) 35% 42%, transparent 43% 50%, rgba(120, 150, 190, .15) 51% 55%, transparent 56% 63%, rgba(120, 150, 190, .15) 64% 68%, transparent 69%),
    linear-gradient(90deg, #1c2c54, #22376e 15%, #243a74 75%, #26345a 88%, #20305a);
}
.orb { width: 38px; height: 38px; margin: 0 14px 0 8px; }
.task { width: 58px; height: 38px; display: grid; place-items: center; margin-right: 4px; border-radius: 3px; }
.task svg { width: 32px; height: 32px; }
.task .framed { width: 32px; height: 30px; border: 2px solid #fff; background: #000; }
.task-open { border: 1px solid #8c9cbc; background: linear-gradient(150deg, rgba(210, 220, 240, .6), rgba(130, 150, 190, .35) 50%, rgba(70, 90, 140, .4) 51%); }
.task-active { border: 1px solid #e0e8f4; background: linear-gradient(150deg, #dce2ee, #a8b2cc 50%, #8490b4 51%, #a4aecb); }
.tray { display: flex; align-items: center; gap: 8px; margin-left: auto; color: #fff; }
.lang { margin: 0 8px 4px 0; font-size: 12px; }
.trayicon { width: 16px; height: 16px; }
.clock { display: flex; flex-direction: column; align-items: center; margin: 0 4px 0 11px; line-height: 17px; }
.peek { width: 13px; height: 38px; border: 1px solid #6c7ca0; border-radius: 1px; background: linear-gradient(150deg, #8c98b0, #3c4a6c 50%, #28365a); }
```
